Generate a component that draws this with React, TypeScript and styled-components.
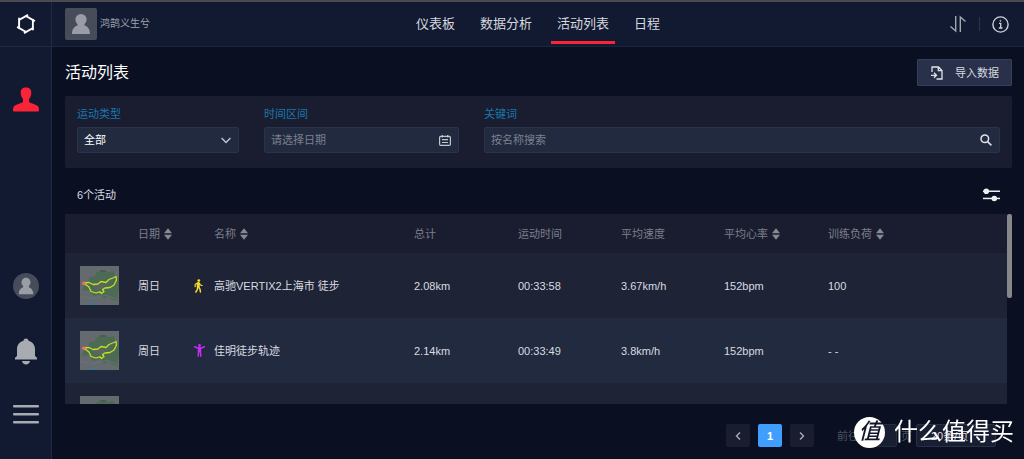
import React from "react";
import styled, { createGlobalStyle } from "styled-components";

const GlobalStyle = createGlobalStyle`
  * { box-sizing: border-box; }
  body {
    margin: 0;
    background: #0a1022;
    color: #d9dbe0;
    font-family: "Liberation Sans", "Noto Sans CJK SC", sans-serif;
    font-size: 11px;
    line-height: 16px;
  }
  button, input, select { font: inherit; color: inherit; margin: 0; }
  svg { display: block; flex: none; }
`;

const Shell = styled.div`
  display: grid;
  grid-template-columns: 52px minmax(0, 1fr);
  height: 100vh;
  min-height: 400px;
  border-top: 2px solid #4b4a50;
`;

const Sidebar = styled.aside`
  display: flex;
  flex-direction: column;
  align-items: center;
  background: #121a32;
  border-right: 1px solid #222a41;
  padding-bottom: 34px;
`;

const LogoBox = styled.div`
  width: 100%;
  height: 45px;
  display: flex;
  align-items: center;
  justify-content: center;
  border-bottom: 1px solid #222a41;
`;

const IconButton = styled.button`
  display: flex;
  padding: 0;
  border: 0;
  background: none;
  cursor: pointer;
`;

const SideTop = styled.div`
  margin-top: 40px;
  flex: 1;
`;

const SideBottom = styled.div`
  display: flex;
  flex-direction: column;
  align-items: center;
  gap: 39px;
`;

const Page = styled.div`
  display: flex;
  flex-direction: column;
  min-width: 0;
  min-height: 0;
`;

const Header = styled.header`
  display: grid;
  grid-template-columns: 1fr auto 1fr;
  height: 45px;
  flex: none;
  padding: 0 15px;
  background: #121a32;
  border-bottom: 1px solid #1b2439;
`;

const User = styled.div`
  display: flex;
  align-items: center;
  gap: 3px;
  margin-left: -2px;
  font-size: 10px;
  color: #a0a4b0;
`;

const Nav = styled.nav`
  display: flex;
  gap: 13px;
  height: 42px;
`;

const NavLink = styled.a<{ $active?: boolean }>`
  display: flex;
  align-items: center;
  padding: 4px 6px 0;
  font-size: 13px;
  color: #d5d8df;
  text-decoration: none;
  border-bottom: 3px solid ${(p) => (p.$active ? "#fb2337" : "transparent")};
`;

const Tools = styled.div`
  display: flex;
  align-items: center;
  justify-content: flex-end;
  gap: 12px;
`;

const Divider = styled.span`
  width: 1px;
  height: 14px;
  background: #2c344b;
`;

const Main = styled.main`
  flex: 1;
  min-height: 0;
  display: flex;
  flex-direction: column;
  padding: 12px 12px 12px 13px;
`;

const TitleRow = styled.div`
  display: flex;
  align-items: center;
  justify-content: space-between;
  height: 27px;
  flex: none;
`;

const Title = styled.h1`
  margin: 0;
  font-size: 16px;
  line-height: 24px;
  font-weight: 400;
  color: #fff;
`;

const ImportButton = styled.button`
  display: flex;
  align-items: center;
  gap: 12px;
  height: 27px;
  padding: 0 12px 0 13px;
  border: 1px solid #363f59;
  border-radius: 1px;
  background: #28304a;
  color: #d9dbe0;
  cursor: pointer;
`;

const Filters = styled.form`
  display: grid;
  grid-template-columns: 162px 195px minmax(0, 1fr);
  gap: 25px;
  flex: none;
  height: 72px;
  margin-top: 10px;
  padding: 10px 12px;
  background: #191d2f;
  border-radius: 2px;
`;

const Field = styled.div`
  display: flex;
  flex-direction: column;
  gap: 5px;
`;

const FieldLabel = styled.label`
  color: #1878ae;
`;

const Control = styled.div`
  display: grid;
  grid-template-columns: minmax(0, 1fr) auto;
  align-items: center;
  height: 26px;
  padding-right: 7px;
  background: #222a3f;
  border: 1px solid #2b334a;
  border-radius: 2px;
`;

const TextInput = styled.input`
  width: 100%;
  height: 24px;
  padding: 0 6px;
  border: 0;
  outline: 0;
  background: none;
  &::placeholder { color: #7b8190; opacity: 1; }
`;

const SelectInput = styled.select`
  appearance: none;
  width: 100%;
  height: 24px;
  padding: 0 6px;
  border: 0;
  outline: 0;
  background: none;
  color: #fff;
`;

const CountRow = styled.div`
  display: flex;
  align-items: center;
  justify-content: space-between;
  height: 46px;
  flex: none;
  padding: 8px 12px 0;
`;

const TableArea = styled.section`
  display: grid;
  grid-template-columns: minmax(0, 1fr) 5px;
  flex: 1;
  min-height: 0;
`;

const TableClip = styled.div`
  overflow: hidden;
  min-height: 0;
  background: #191d2f;
`;

const Table = styled.table`
  width: 100%;
  table-layout: fixed;
  border-collapse: collapse;
`;

const HeadCell = styled.th`
  height: 39px;
  padding: 0;
  text-align: left;
  font-weight: 400;
  color: #7b7f8b;
`;

const HeadLabel = styled.span`
  display: flex;
  align-items: center;
  gap: 4px;
`;

const Row = styled.tr`
  height: 65px;
  background: #1e2336;
  &:nth-child(even) { background: #222a3f; }
`;

const Cell = styled.td<{ $inset?: number }>`
  padding: 0 0 0 ${(p) => p.$inset ?? 0}px;
  white-space: nowrap;
`;

const ScrollThumb = styled.div`
  height: 44%;
  background: #87878a;
  border-radius: 2px;
`;

const Pager = styled.footer`
  display: flex;
  align-items: center;
  justify-content: flex-end;
  gap: 8px;
  flex: none;
  height: 23px;
  margin-top: 20px;
  padding-right: 16px;
  color: #4d5262;
`;

const PageButton = styled.button<{ $current?: boolean }>`
  display: flex;
  align-items: center;
  justify-content: center;
  width: 24px;
  height: 23px;
  padding: 0;
  border: 0;
  border-radius: 2px;
  font-weight: 700;
  color: ${(p) => (p.$current ? "#fff" : "#a9adb8")};
  background: ${(p) => (p.$current ? "#409eff" : "#191d2f")};
`;

const PagerOptions = styled.div`
  display: flex;
  align-items: center;
  gap: 4px;
  margin-left: 15px;
`;

const Jump = styled.label`
  display: flex;
  align-items: center;
  gap: 4px;
`;

const JumpInput = styled.input`
  width: 34px;
  height: 23px;
  border: 1px solid #252c40;
  border-radius: 2px;
  background: #191f32;
`;

const PageSize = styled.select`
  appearance: none;
  width: 80px;
  height: 23px;
  padding: 0 14px;
  border: 1px solid #2a3145;
  border-radius: 2px;
  background: #191f32;
  color: #d9dbe0;
`;

const Watermark = styled.div`
  position: fixed;
  right: 10px;
  bottom: 11px;
  display: flex;
  align-items: center;
  gap: 9px;
  font-size: 24px;
  line-height: 32px;
  color: #fff;
  pointer-events: none;
`;

const Seal = styled.span`
  display: flex;
  align-items: center;
  justify-content: center;
  width: 31px;
  height: 31px;
  border-radius: 50%;
  background: #fff;
  color: #11162a;
  font-size: 22px;
  font-weight: 500;
  font-style: italic;
`;

const Logo = () => (
  <svg width="20" height="22" viewBox="0 0 20 22" fill="none" stroke="#fff" strokeWidth="1.900">
    {[0, 60, 120, 180, 240, 300].map((angle) => (
      <path key={angle} d="M2.600 7.300 12 1.900" transform={`rotate(${angle} 10 11)`} />
    ))}
  </svg>
);

const SidePerson = () => (
  <svg width="26" height="25" viewBox="0 0 26 25" fill="#fb2337">
    <path d="M13 .5c3.700 0 5.300 2 5.300 5.100 0 3.200-1.100 5.200-2.300 6.500v3c1.800 1.400 6.300 2.200 8.400 3.700 1.300 1 1.600 2.700 1.600 4.500 0 .8-.4 1.200-1.200 1.200H1.200C.4 24.500 0 24.100 0 23.300c0-1.800.3-3.500 1.600-4.500 2.100-1.500 6.600-2.300 8.400-3.700v-3C8.800 10.800 7.700 8.800 7.700 5.600 7.700 2.500 9.300.5 13 .5z" />
  </svg>
);

const Avatar = ({ size, round }: { size: number; round?: boolean }) => (
  <svg width={size} height={size} viewBox="0 0 32 32">
    <rect width="32" height="32" rx={round ? 16 : 2} fill="#474c5b" />
    <circle cx="16" cy="11.500" r="5.600" fill="#9b9da6" />
    <path d="M12.500 14h7v3.500c3.500 1 5.500 4 5.500 8.500H7c0-4.500 2-7.500 5.500-8.500z" fill="#9b9da6" />
  </svg>
);

const Bell = () => (
  <svg width="24" height="27" viewBox="0 0 24 27" fill="#a9abb3">
    <path d="M12 .5c1.500 0 2.500 1 2.500 2.300C18.500 4 21 7 21 11v7l2 1.800v1.700H1v-1.700L3 18v-7c0-4 2.500-7 6.500-8.200C9.500 1.500 10.500.5 12 .5z" />
    <path d="M8 23h8c-.4 2.300-2 3.500-4 3.500S8.400 25.300 8 23z" />
  </svg>
);

const Menu = () => (
  <svg width="26" height="21" viewBox="0 0 26 21" fill="#a9abb3">
    <rect y="1" width="26" height="2.600" rx="1" />
    <rect y="9" width="26" height="2.600" rx="1" />
    <rect y="17" width="26" height="2.600" rx="1" />
  </svg>
);

const SwapIcon = () => (
  <svg width="18" height="18" viewBox="0 0 18 18" fill="none" stroke="#a3a7b2" strokeWidth="1.400">
    <path d="M1.500 11.500 6.700 16V1M11.300 17V2l5.200 4.500" />
  </svg>
);

const InfoIcon = () => (
  <svg width="17" height="17" viewBox="0 0 17 17" fill="none" stroke="#cfd2d9">
    <circle cx="8.500" cy="8.500" r="7.600" strokeWidth="1.400" />
    <path d="M7 7.300h1.700v4.500M6.800 12h3.700" strokeWidth="1.300" />
    <circle cx="8.400" cy="4.800" r=".5" />
  </svg>
);

const ImportIcon = () => (
  <svg width="12" height="14" viewBox="0 0 12 14" fill="none" stroke="#e1e3e8" strokeWidth="1.300">
    <path d="M1 6V1h6.500L11 4.500V13H5.500M7.300 1v3.700H11" />
    <path d="M0 9.300h5M3 6.800l2.500 2.500L3 11.800" />
  </svg>
);

const Chevron = () => (
  <svg width="10" height="7" viewBox="0 0 10 7" fill="none" stroke="#c3c7d0" strokeWidth="1.300">
    <path d="m.6 1 4.400 4.500L9.400 1" />
  </svg>
);

const CalendarIcon = () => (
  <svg width="12" height="11" viewBox="0 0 12 11" fill="none" stroke="#c3c7d0" strokeWidth="1.200">
    <rect x=".6" y="1.300" width="10.800" height="9.100" rx="1.200" />
    <path d="M3.300 0v2.500M8.700 0v2.500M3 4.700h6M3 7.500h6" />
  </svg>
);

const SearchIcon = () => (
  <svg width="12" height="12" viewBox="0 0 12 12" fill="none" stroke="#e1e3e8" strokeWidth="1.500">
    <circle cx="4.800" cy="4.800" r="3.800" />
    <path d="m7.600 7.600 3.800 3.800" />
  </svg>
);

const SlidersIcon = () => (
  <svg width="17" height="14" viewBox="0 0 17 14" fill="#eceef1">
    <rect y="2.500" width="17" height="1.500" />
    <rect y="9.700" width="17" height="1.500" />
    <circle cx="3.300" cy="3.200" r="2.800" />
    <circle cx="11.300" cy="10.500" r="2.800" />
  </svg>
);

const SortIcon = () => (
  <svg width="8" height="12" viewBox="0 0 8 12" fill="#858993">
    <path d="M4 .3 8 5.200H0zM4 11.700 8 6.800H0z" />
  </svg>
);

const Arrow = ({ next }: { next?: boolean }) => (
  <svg width="6" height="8" viewBox="0 0 6 8" fill="none" stroke="currentColor" strokeWidth="1.400">
    <path d={next ? "m1 .5 3.500 3.500L1 7.500" : "M5 .5 1.500 4 5 7.500"} />
  </svg>
);

const Hiker = () => (
  <svg width="9" height="14" viewBox="0 0 9 14" fill="none" stroke="#f2dc2c" strokeLinecap="round" strokeLinejoin="round">
    <circle cx="4.800" cy="1.600" r="1.400" fill="#f2dc2c" stroke="none" />
    <path d="M4.400 4.600 4.200 7.600" strokeWidth="3" />
    <path d="M4.600 8 6 10.200 6.400 13M3.700 8.300 3.200 10.800 1.800 13" strokeWidth="1.500" />
    <path d="M3.200 4 1.200 5.500v2.200M5.400 4.300 6.500 6l1.600.6" strokeWidth="1.200" />
  </svg>
);

const Stretch = () => (
  <svg width="11" height="13" viewBox="0 0 11 13" fill="none" stroke="#c52cf6" strokeLinecap="round">
    <circle cx="5.500" cy="1.500" r="1.400" fill="#c52cf6" stroke="none" />
    <path d="M.7 2.800 3.500 4h4l2.800-1.200" strokeWidth="1.500" />
    <path d="M5.500 3.500v4.700" strokeWidth="3.400" strokeLinecap="butt" />
    <path d="M4.600 7.500 4.200 12.200M6.400 7.500 6.800 12.200" strokeWidth="1.500" />
  </svg>
);

const RouteMap = () => (
  <svg width="39" height="39" viewBox="0 0 39 39">
    <rect width="39" height="39" fill="#646a6e" />
    <path d="M17 6l6-2 6 2 5-1 1 5 4 3v11l-2 6 2 5-6-1-5-4-4 3-4-5-6 2-6-6-6 1 2-5 3-3 3-6 5-1z" fill="#4d6a55" />
    <path d="M12 19l8-2 7 2-3 4-8 1z" fill="#5c665f" />
    <path d="M20 5h6" stroke="#3f5546" />
    <path d="M8 39c1-4 5-4 7 0z" fill="#41798c" />
    <path d="M0 30l12 3 14-4 13 5" fill="none" stroke="#72777a" strokeWidth=".6" />
    <path
      d="M3.500 17 9 16.500 13 18.500 18 18 21 15.500 26 16.500 29 13.500 34 11.500 36 10.500 36.500 14 34 19 30 21.500 25 22 22.500 23.500 24 25.500 21.500 27.500 20 25.800 16 27 11 25.500 9 21z"
      fill="none" stroke="#c3e022" strokeWidth="1.300" strokeLinejoin="round"
    />
    <circle cx="3.700" cy="17.300" r="1.700" fill="#f26b68" />
  </svg>
);

const columns = [
  { label: "", width: 73 },
  { label: "日期", width: 54, sort: true },
  { label: "", width: 22 },
  { label: "名称", width: 200, sort: true },
  { label: "总计", width: 104 },
  { label: "运动时间", width: 103 },
  { label: "平均速度", width: 103 },
  { label: "平均心率", width: 104, sort: true },
  { label: "训练负荷", width: 179, sort: true },
];

const rows = [
  { day: "周日", icon: <Hiker />, name: "高驰VERTIX2上海市 徒步", values: ["2.08km", "00:33:58", "3.67km/h", "152bpm", "100"] },
  { day: "周日", icon: <Stretch />, name: "佳明徒步轨迹", values: ["2.14km", "00:33:49", "3.8km/h", "152bpm", "- -"] },
  { day: "", icon: null, name: "", values: ["", "", "", "", ""] },
];

const totalWidth = columns.reduce((sum, c) => sum + c.width, 0);

export default function App() {
  return (
    <>
      <GlobalStyle />
      <Shell>
        <Sidebar>
          <LogoBox><Logo /></LogoBox>
          <SideTop><IconButton aria-label="个人"><SidePerson /></IconButton></SideTop>
          <SideBottom>
            <IconButton aria-label="账户"><Avatar size={26} round /></IconButton>
            <IconButton aria-label="通知"><Bell /></IconButton>
            <IconButton aria-label="菜单"><Menu /></IconButton>
          </SideBottom>
        </Sidebar>
        <Page>
          <Header>
            <User><Avatar size={32} />鸿鹄义生兮</User>
            <Nav>
              <NavLink href="#dashboard">仪表板</NavLink>
              <NavLink href="#analysis">数据分析</NavLink>
              <NavLink href="#activities" $active>活动列表</NavLink>
              <NavLink href="#calendar">日程</NavLink>
            </Nav>
            <Tools>
              <IconButton aria-label="同步"><SwapIcon /></IconButton>
              <Divider />
              <IconButton aria-label="信息"><InfoIcon /></IconButton>
            </Tools>
          </Header>
          <Main>
            <TitleRow>
              <Title>活动列表</Title>
              <ImportButton><ImportIcon />导入数据</ImportButton>
            </TitleRow>
            <Filters>
              <Field>
                <FieldLabel htmlFor="type">运动类型</FieldLabel>
                <Control>
                  <SelectInput id="type"><option>全部</option></SelectInput>
                  <Chevron />
                </Control>
              </Field>
              <Field>
                <FieldLabel htmlFor="range">时间区间</FieldLabel>
                <Control>
                  <TextInput id="range" placeholder="请选择日期" />
                  <CalendarIcon />
                </Control>
              </Field>
              <Field>
                <FieldLabel htmlFor="keyword">关键词</FieldLabel>
                <Control>
                  <TextInput id="keyword" placeholder="按名称搜索" />
                  <SearchIcon />
                </Control>
              </Field>
            </Filters>
            <CountRow>
              <span>6个活动</span>
              <IconButton aria-label="筛选"><SlidersIcon /></IconButton>
            </CountRow>
            <TableArea>
              <TableClip>
                <Table>
                  <colgroup>
                    {columns.map((c, i) => (
                      <col key={i} style={{ width: `${(c.width / totalWidth) * 100}%` }} />
                    ))}
                  </colgroup>
                  <thead>
                    <tr>
                      {columns.map((c, i) => (
                        <HeadCell key={i}>
                          <HeadLabel>{c.label}{c.sort && <SortIcon />}</HeadLabel>
                        </HeadCell>
                      ))}
                    </tr>
                  </thead>
                  <tbody>
                    {rows.map((r, i) => (
                      <Row key={i}>
                        <Cell $inset={15}><RouteMap /></Cell>
                        <Cell>{r.day}</Cell>
                        <Cell $inset={2}>{r.icon}</Cell>
                        <Cell>{r.name}</Cell>
                        {r.values.map((v, j) => <Cell key={j}>{v}</Cell>)}
                      </Row>
                    ))}
                  </tbody>
                </Table>
              </TableClip>
              <ScrollThumb />
            </TableArea>
            <Pager>
              <PageButton aria-label="上一页"><Arrow /></PageButton>
              <PageButton $current>1</PageButton>
              <PageButton aria-label="下一页"><Arrow next /></PageButton>
              <PagerOptions>
                <Jump>前往<JumpInput />页</Jump>
                <PageSize aria-label="每页条数"><option>20条/页</option></PageSize>
              </PagerOptions>
            </Pager>
          </Main>
        </Page>
      </Shell>
      <Watermark><Seal>值</Seal>什么值得买</Watermark>
    </>
  );
}
